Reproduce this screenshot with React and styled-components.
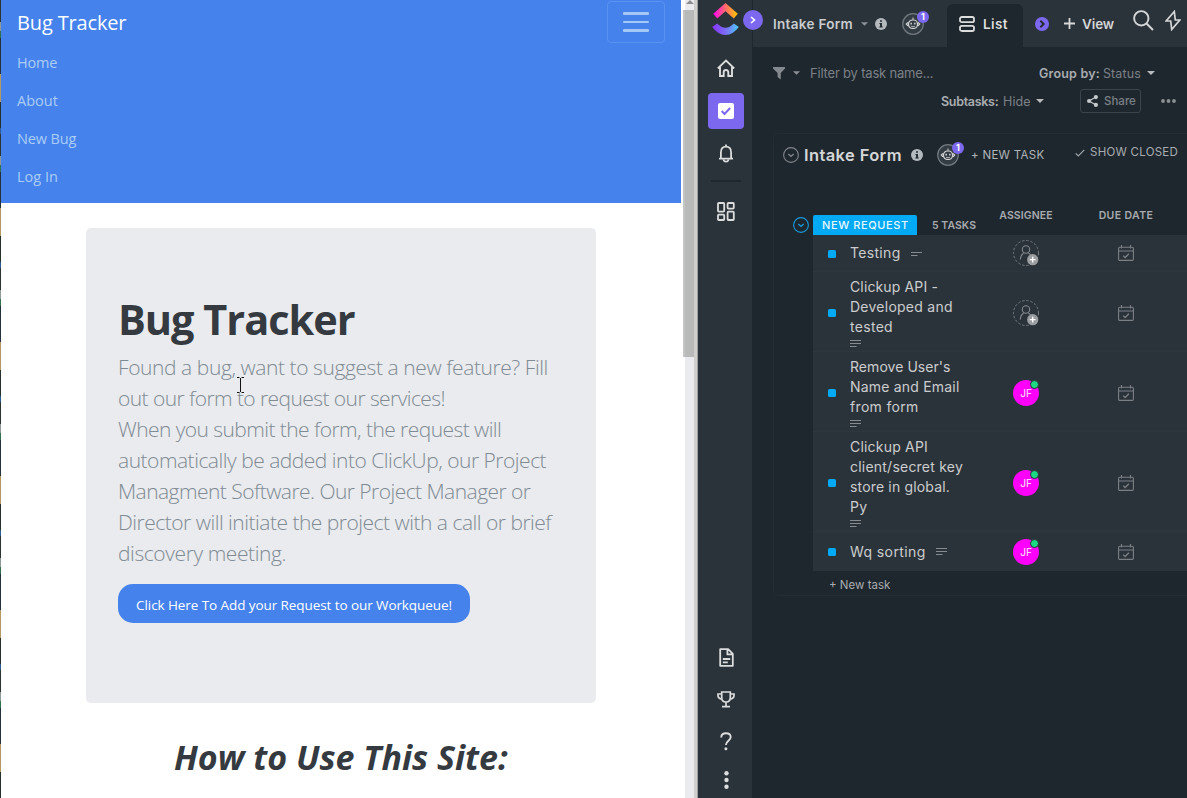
import React from "react";
import styled, { createGlobalStyle } from "styled-components";

const GlobalStyle = createGlobalStyle`
  * { box-sizing: border-box; }
  body { margin: 0; overflow: hidden; background: #1f272e; }
  h1, h2, p, ul { margin: 0; padding: 0; font-weight: inherit; }
  svg { display: block; flex: none; }
`;

const Screen = styled.div`
  display: flex;
  width: 1187px;
  height: 798px;
  overflow: hidden;
`;

/* ---------- left window: bug tracker site ---------- */

const DesktopEdge = styled.div`
  flex: none;
  width: 1px;
  background: repeating-linear-gradient(
    180deg, #2c3431 0 22px, #8f9a98 22px 31px, #2f6f4b 31px 38px, #24303a 38px 74px, #b39a63 74px 102px,
    #27312c 102px 128px, #2c5c8f 128px 134px
  );
`;

const Site = styled.div`
  flex: none;
  width: 684px;
  padding-right: 4px;
  background: #fff;
  font-family: "Open Sans", "Noto Sans", sans-serif;
`;

const Navbar = styled.nav`
  height: 203px;
  padding: 1px 16px 0;
  background: #4582ec;
`;

const NavTop = styled.div`
  display: flex;
  justify-content: space-between;
  height: 43px;
`;

const Brand = styled.div`
  font-size: 20px;
  line-height: 43px;
  color: #fff;
  letter-spacing: -0.15px;
`;

const Toggler = styled.div`
  display: flex;
  flex-direction: column;
  align-items: center;
  justify-content: center;
  gap: 6px;
  width: 58px;
  height: 42px;
  border: 1px solid #5a92f0;
  border-radius: 4px;
`;

const TogglerBar = styled.span`
  width: 26px;
  height: 2.4px;
  border-radius: 1px;
  background: #a5c9f6;
`;

const NavLink = styled.div`
  height: 38px;
  line-height: 38px;
  font-size: 14.5px;
  color: #abcdf5;
  letter-spacing: ${(p) => p.$ls || 0}px;
`;

const Jumbotron = styled.section`
  width: 510px;
  height: 475px;
  margin: 25px 0 0 85px;
  padding: 66px 32px 0;
  border-radius: 5px;
  background: #e9ebee;
`;

const Title = styled.h1`
  font-size: 41.5px;
  font-weight: 700;
  line-height: 50px;
  color: #343a40;
  white-space: nowrap;
  letter-spacing: -1.02px;
`;

const Lead = styled.p`
  margin-top: 8px;
`;

const LeadLine = styled.span`
  display: block;
  height: 31px;
  line-height: 31px;
  font-size: 21px;
  font-weight: 300;
  color: #808a93;
  white-space: nowrap;
  letter-spacing: ${(p) => p.$ls || 0}px;
`;

const RequestButton = styled.button`
  display: block;
  width: 352px;
  height: 39px;
  margin-top: 15px;
  padding: 1px 0 0;
  border: 0;
  border-radius: 15px;
  background: #4582ec;
  color: #fff;
  font: 13.5px/38px "Open Sans", "Noto Sans", sans-serif;
  line-height: 40px;
  white-space: nowrap;
  letter-spacing: -0.08px;
`;

const HowTo = styled.h2`
  margin: 30px 0 0 173px;
  font-size: 34px;
  font-weight: 700;
  font-style: italic;
  line-height: 48px;
  color: #343a40;
  white-space: nowrap;
`;

const Caret = styled.svg`
  position: absolute;
  left: 236px;
  top: 377px;
`;

const Scrollbar = styled.div`
  display: flex;
  flex-direction: column;
  flex: none;
  width: 9px;
  background: #e9ebee;
`;

const ScrollArrow = styled.div`
  display: flex;
  align-items: flex-start;
  justify-content: center;
  height: 10px;
`;

const ScrollThumb = styled.div`
  height: 347px;
  margin-left: -2px;
  border-left: 2px solid #c3c5c4;
  background: #b8bab9;
`;

const WindowEdge = styled.div`
  flex: none;
  width: 4px;
  background: linear-gradient(90deg, #cfd0ce 0 3px, #9b9d9c 3px);
`;

/* ---------- right window: task manager ---------- */

const Rail = styled.aside`
  position: relative;
  display: flex;
  flex: none;
  flex-direction: column;
  align-items: center;
  width: 54px;
  padding: 3px 0 0 2px;
  background: #2b333a;
  color: #dcdddd;
`;

const RailItem = styled.div`
  display: flex;
  align-items: center;
  justify-content: center;
  width: 36px;
  height: 36px;
  margin-top: ${(p) => p.$gap || 0}px;
  border-radius: 4px;
  background: ${(p) => (p.$active ? "#7b68ee" : "transparent")};
`;

const RailRule = styled.div`
  width: 30px;
  height: 2px;
  margin-top: 9px;
  background: #1f272e;
`;

const RailSpacer = styled.div`
  flex: 1;
`;

const Expander = styled.div`
  position: absolute;
  z-index: 2;
  top: 10px;
  right: -11px;
  display: flex;
  align-items: center;
  justify-content: center;
  width: 20px;
  height: 20px;
  border-radius: 50%;
  background: #7b68ee;
`;

const Workspace = styled.main`
  flex: 1;
  min-width: 0;
  overflow: hidden;
  background: #1f272e;
  font-family: Inter, "Liberation Sans", sans-serif;
`;

const Label = styled.span`
  flex: none;
  font-size: ${(p) => p.$size || 13}px;
  font-weight: ${(p) => p.$weight || 400};
  color: ${(p) => p.$color || "#c9cccf"};
  letter-spacing: ${(p) => p.$ls || 0}px;
  margin-left: ${(p) => p.$ml || 0}px;
  width: ${(p) => (p.$w ? p.$w + "px" : "auto")};
  white-space: nowrap;
`;

const Slot = styled.span`
  display: flex;
  flex: none;
  margin-left: ${(p) => p.$ml || 0}px;
  margin-top: ${(p) => p.$mt || 0}px;
  margin-bottom: ${(p) => p.$mb || 0}px;
`;

const TopBar = styled.header`
  display: flex;
  align-items: center;
  height: 47px;
  padding-left: 20px;
  border-left: 1px solid #20282f;
  background: #2b333a;
`;

const ListTab = styled.div`
  display: flex;
  align-items: center;
  align-self: flex-end;
  flex: none;
  width: 76px;
  height: 43px;
  margin-left: 23px;
  padding: 0 0 3px 12px;
  border-radius: 6px 6px 0 0;
  background: #1f272e;
`;

const BotBadge = styled.span`
  position: relative;
  flex: none;
  width: 22px;
  height: 22px;
  margin-left: ${(p) => p.$ml}px;
`;

const BotCount = styled.span`
  position: absolute;
  top: -2px;
  left: 15px;
  width: 12px;
  height: 12px;
  border-radius: 6px;
  background: #7b68ee;
  color: #fff;
  font-size: 9px;
  font-weight: 700;
  line-height: 12px;
  text-align: center;
`;

const FilterRow = styled.div`
  display: flex;
  align-items: center;
  height: 28px;
  margin-top: 12px;
  padding-left: 21px;
`;

const OptionsRow = styled.div`
  display: flex;
  align-items: center;
  height: 28px;
  padding-left: 189px;
`;

const ShareButton = styled.div`
  display: flex;
  flex: none;
  align-items: center;
  width: 61px;
  height: 24px;
  margin-left: 36px;
  padding-left: 6px;
  border: 1px solid #3c444b;
  border-radius: 3px;
`;

const Card = styled.section`
  width: 430px;
  height: 463px;
  margin: 18px 0 0 21px;
  border: 1px solid #252d34;
  border-radius: 6px;
`;

const CardHead = styled.div`
  display: flex;
  align-items: center;
  height: 42px;
  padding-left: 9px;
`;

const GroupHead = styled.div`
  display: flex;
  align-items: flex-end;
  height: 59px;
  padding-left: 19px;
`;

const StatusTag = styled.div`
  display: flex;
  align-items: center;
  flex: none;
  width: 104px;
  height: 20px;
  margin-left: 4px;
  padding-left: 9px;
  border-radius: 2px 2px 0 0;
  background: #02a9f4;
`;

const ColumnLabel = styled.div`
  display: flex;
  justify-content: center;
  flex: none;
  width: 100px;
  height: 26px;
  line-height: 14px;
`;

const CountCell = styled.div`
  display: flex;
  align-items: center;
  width: 44px;
  height: 20px;
  margin-left: 15px;
`;

const TaskList = styled.div`
  margin-left: 39px;
  background: #2b333a;
`;

const TaskRow = styled.div`
  display: grid;
  grid-template-columns: 37px 126px 100px 100px;
  align-items: center;
  height: ${(p) => p.$h}px;
  padding-top: ${(p) => (p.$inline ? 0 : 2)}px;
  border-bottom: 1px solid #2f373e;
  &:last-child { border-bottom: 0; }
`;

const StatusSquare = styled.span`
  width: 8px;
  height: 8px;
  margin: 1px 0 0 15px;
  border-radius: 1.5px;
  background: #02a9f4;
`;

const TaskName = styled.div`
  display: flex;
  flex-direction: ${(p) => (p.$inline ? "row" : "column")};
  align-items: ${(p) => (p.$inline ? "center" : "flex-start")};
  gap: ${(p) => (p.$inline ? "10px" : "0")};
  padding-top: ${(p) => (p.$inline ? 0 : 2)}px;
`;

const TaskLine = styled.span`
  height: 20px;
  font-size: 14px;
  line-height: 20px;
  color: #cbcdce;
  white-space: nowrap;
  letter-spacing: ${(p) => p.$ls || 0}px;
`;

const NoteSlot = styled.span`
  height: ${(p) => (p.$inline ? 9 : 14)}px;
  padding-top: ${(p) => (p.$inline ? 1 : 3)}px;
`;

const Cell = styled.div`
  display: flex;
  justify-content: center;
`;

const Avatar = styled.div`
  position: relative;
  width: 26px;
  height: 26px;
  border-radius: 50%;
  background: #ff00fc;
  color: #fbd5fb;
  font-size: 10px;
  font-weight: 500;
  line-height: 26px;
  text-align: center;
`;

const Online = styled.span`
  position: absolute;
  top: 0;
  right: 0;
  width: 9px;
  height: 9px;
  border: 1px solid #2b333a;
  border-radius: 50%;
  background: #1bd882;
`;

const NewTask = styled.div`
  padding-left: 55px;
  line-height: 24px;
`;

/* ---------- icons ---------- */

const Down = ({ color = "#8c9196", w = 7 }) => (
  <svg width={w} height="4" viewBox="0 0 8 4"><path d="M0 0h8L4 4z" fill={color} /></svg>
);

const Info = () => (
  <svg width="12" height="12" viewBox="0 0 12 12">
    <circle cx="6" cy="6" r="6" fill="#b4b9be" />
    <path d="M5 2.2h2v1.6H5zM4.4 4.9H7v3.6h.8v1.1H4.3V8.5H5V6h-.6z" fill="#252d34" />
  </svg>
);

const Bot = ({ ml }) => (
  <BotBadge $ml={ml}>
    <svg width="22" height="22" viewBox="0 0 22 22" fill="none">
      <circle cx="11" cy="11" r="10.3" fill="#343c43" stroke="#727a80" strokeWidth="1.2" />
      <path d="M11 4.5v2.2" stroke="#d5d7d8" strokeWidth="1" />
      <rect x="6.5" y="7" width="9" height="8.5" rx="4" stroke="#d5d7d8" strokeWidth="1.2" />
      <path d="M6 9.3 4.3 11 6 12.8M16 9.3l1.7 1.7-1.7 1.8" stroke="#d5d7d8" strokeWidth="1.2" />
      <path d="M9.2 9.8v1.8M12.8 9.8v1.8" stroke="#d5d7d8" strokeWidth="1.4" />
      <path d="M9.2 13.3q1.8 1.2 3.6 0" stroke="#d5d7d8" strokeWidth=".9" />
    </svg>
    <BotCount>1</BotCount>
  </BotBadge>
);

const CircleDown = ({ color }) => (
  <svg width="16" height="16" viewBox="0 0 16 16" fill="none" stroke={color}>
    <circle cx="8" cy="8" r="7.4" strokeWidth="1.1" />
    <path d="m5.3 7 2.7 2.3L10.7 7" strokeWidth="1.3" />
  </svg>
);

const Note = ({ dense }) => (
  <svg width="11" height="7" viewBox="0 0 11 7" stroke="#868b8f">
    {dense ? <path d="M0 .5h11M0 3.5h11M0 6.5h6.5" /> : <path d="M0 2.5h11M0 5.5h6.5" />}
  </svg>
);

const EmptyAssignee = () => (
  <svg width="26" height="26" viewBox="0 0 26 26" fill="none">
    <circle cx="13" cy="13" r="12.5" stroke="#777d82" strokeDasharray="2.4 1.8" />
    <circle cx="13" cy="9.5" r="3.7" stroke="#858a8e" strokeWidth="1.1" />
    <path d="M7.3 19.5q.2-4.6 3.3-6.2M15.5 13.3q1.5.8 2.2 2" stroke="#858a8e" strokeWidth="1.1" />
    <circle cx="19.7" cy="19.7" r="5.6" fill="#9b9ea1" />
    <path d="M19.7 16.8v5.8M16.8 19.7h5.8" stroke="#fff" strokeWidth="1.3" />
  </svg>
);

const Calendar = () => (
  <svg width="16" height="16" viewBox="0 0 16 16" fill="none" stroke="#7b8085">
    <rect x=".6" y="2.2" width="14.8" height="13.2" rx="1.2" strokeWidth="1.1" />
    <path d="M.6 6h14.8M3.5 0v3.6M12.5 0v3.6" strokeWidth="1.1" />
    <path d="m5.2 10.6 1.9 1.9 3.8-3.8" strokeWidth="1.3" />
  </svg>
);

const Logo = () => (
  <svg width="28" height="33" viewBox="0 0 28 33" fill="none">
    <defs>
      <linearGradient id="logoTop" x1="0" x2="1">
        <stop offset="0" stopColor="#ff02f0" /><stop offset=".5" stopColor="#ff6a6c" /><stop offset="1" stopColor="#ffc800" />
      </linearGradient>
      <linearGradient id="logoBottom" x1="0" x2="1">
        <stop offset="0" stopColor="#8930fd" /><stop offset=".55" stopColor="#7a74f4" /><stop offset="1" stopColor="#49ccf9" />
      </linearGradient>
    </defs>
    <path d="M1.2 10.8 13.5 0l12.3 10.8-4 4.8-8.3-7.4-8.3 7.4z" fill="url(#logoTop)" />
    <path d="m.2 24.1 4.9-3.7q8.4 8.5 16.8 0l4.9 3.7Q21 32 13.5 32T.2 24.1z" fill="url(#logoBottom)" />
  </svg>
);

const HomeIcon = () => (
  <svg width="18" height="18" viewBox="0 0 18 18" fill="none" stroke="currentColor" strokeWidth="1.9">
    <path d="M.8 9.4 9 1.6l8.2 7.8M3 8v9h3.7v-3.7a2.3 2.3 0 0 1 4.6 0V17H15V8" />
  </svg>
);

const TasksIcon = () => (
  <svg width="16" height="16" viewBox="0 0 16 16" fill="none">
    <rect width="16" height="16" rx="2" fill="#fff" />
    <path d="m3.7 8 2.8 3 5.6-6" stroke="#7b68ee" strokeWidth="2" />
  </svg>
);

const BellIcon = () => (
  <svg width="16" height="19" viewBox="0 0 16 19" fill="none" stroke="currentColor" strokeWidth="1.8">
    <path d="M8 .5v2M1 14.6h14M2.9 14.4V8.4C2.9 5 4.9 2.7 8 2.7s5.1 2.3 5.1 5.7v6" />
    <path d="M5.4 15.4q.5 2.3 2.6 2.3t2.6-2.3" />
  </svg>
);

const GridIcon = () => (
  <svg width="18" height="19" viewBox="0 0 18 19" fill="none" stroke="currentColor" strokeWidth="1.8">
    <rect x="1" y="1" width="6.2" height="8.6" rx=".8" /><rect x="10.6" y="1" width="6.2" height="5.6" rx=".8" />
    <rect x="1" y="12.6" width="6.2" height="5.4" rx=".8" /><rect x="10.6" y="9.6" width="6.2" height="8.4" rx=".8" />
  </svg>
);

const DocIcon = () => (
  <svg width="15" height="19" viewBox="0 0 15 19" fill="none" stroke="currentColor" strokeWidth="1.8" strokeLinejoin="round">
    <path d="M1.2 1.2h8l4.6 4.6v12H1.2zM8.4 1.4v5h5M3.8 11h7.4M3.8 14.4h5" />
  </svg>
);

const TrophyIcon = () => (
  <svg width="18" height="17" viewBox="0 0 18 17" fill="none" stroke="currentColor" strokeWidth="1.7">
    <path d="M4.7 1h8.6v5.5q0 4.5-4.3 4.5T4.7 6.5zM4.5 3H1v1.6q0 3 4 3.6M13.5 3H17v1.6q0 3-4 3.6M9 11v4M5 15.6h8" />
  </svg>
);

const HelpIcon = () => (
  <svg width="12" height="19" viewBox="0 0 12 19" fill="none">
    <path d="M1.2 5.5Q1.4 1.3 6 1.3t4.7 3.8c0 3.6-4.8 3.8-4.8 8" stroke="currentColor" strokeWidth="1.9" />
    <circle cx="5.9" cy="16.8" r="1.5" fill="currentColor" />
  </svg>
);

const MoreIcon = () => (
  <svg width="5" height="18" viewBox="0 0 5 18" fill="currentColor">
    <circle cx="2.5" cy="2.2" r="2.2" /><circle cx="2.5" cy="9" r="2.2" /><circle cx="2.5" cy="15.8" r="2.2" />
  </svg>
);

/* ---------- content ---------- */

const navLinks = [
  ["Home", -0.2],
  ["About", 0],
  ["New Bug", -0.12],
  ["Log In", 0],
];

const leadLines = [
  ["Found a bug, want to suggest a new feature? Fill", -0.42],
  ["out our form to request our services!", -0.57],
  ["When you submit the form, the request will", -0.56],
  ["automatically be added into ClickUp, our Project", -0.49],
  ["Managment Software. Our Project Manager or", -0.54],
  ["Director will initiate the project with a call or brief", -0.5],
  ["discovery meeting.", -0.41],
];

const tasks = [
  { h: 37, lines: [["Testing", 0.32]], inline: true },
  { h: 80, lines: [["Clickup API -", 0.137], ["Developed and", 0.25], ["tested", 0.302]] },
  { h: 80, lines: [["Remove User's", 0.05], ["Name and Email", 0.2], ["from form", 0.33]], who: "JF" },
  { h: 100, lines: [["Clickup API", 0.196], ["client/secret key", 0.222], ["store in global.", 0.166], ["Py", 0.3]], who: "JF" },
  { h: 39, lines: [["Wq sorting", 0.4]], inline: true, dense: true, who: "JF" },
];

export default function App() {
  return (
    <Screen>
      <GlobalStyle />
      <DesktopEdge />
      <Site>
        <Navbar>
          <NavTop>
            <Brand>Bug Tracker</Brand>
            <Toggler><TogglerBar /><TogglerBar /><TogglerBar /></Toggler>
          </NavTop>
          {navLinks.map(([text, ls]) => <NavLink key={text} $ls={ls}>{text}</NavLink>)}
        </Navbar>
        <Jumbotron>
          <Title>Bug Tracker</Title>
          <Lead>{leadLines.map(([text, ls]) => <LeadLine key={text} $ls={ls}>{text}</LeadLine>)}</Lead>
          <RequestButton>Click Here To Add your Request to our Workqueue!</RequestButton>
        </Jumbotron>
        <HowTo>How to Use This Site:</HowTo>
        <Caret width="9" height="17" viewBox="0 0 9 17" stroke="#111" fill="none">
          <path d="M1 .5h2.5M5.5 .5H8M4.5 1v14M1 15.5h2.5M5.5 15.5H8" />
        </Caret>
      </Site>
      <Scrollbar>
        <ScrollArrow><svg width="8" height="5" viewBox="0 0 8 5"><path d="M4 0l4 4H0z" fill="#8a8c8e" /></svg></ScrollArrow>
        <ScrollThumb />
      </Scrollbar>
      <WindowEdge />
      <Rail>
        <Logo />
        <Expander><svg width="6" height="8" viewBox="0 0 6 8" fill="none"><path d="m1 1 3.5 3L1 7" stroke="#fff" strokeWidth="1.6" /></svg></Expander>
        <RailItem $gap={14}><HomeIcon /></RailItem>
        <RailItem $gap={7} $active><TasksIcon /></RailItem>
        <RailItem $gap={6}><BellIcon /></RailItem>
        <RailRule />
        <RailItem $gap={11}><GridIcon /></RailItem>
        <RailSpacer />
        <RailItem><DocIcon /></RailItem>
        <RailItem $gap={6}><TrophyIcon /></RailItem>
        <RailItem $gap={6}><HelpIcon /></RailItem>
        <RailItem $gap={3}><MoreIcon /></RailItem>
      </Rail>
      <Workspace>
        <TopBar>
          <Label $size={13.5} $ls={0.3} $weight={600} $w={80}>Intake Form</Label>
          <Slot $ml={8}><Down /></Slot>
          <Slot $ml={7}><Info /></Slot>
          <Bot ml={15} />
          <ListTab>
            <svg width="16" height="16" viewBox="0 0 16 16" fill="none" stroke="#dcdddd" strokeWidth="1.8">
              <rect x="1" y="1" width="14" height="5.2" rx="1.8" /><rect x="1" y="9.8" width="14" height="5.2" rx="1.8" />
            </svg>
            <Label $ls={0.4} $ml={8} $size={13.5} $weight={600} $color="#dddede">List</Label>
          </ListTab>
          <Slot $ml={12}>
            <svg width="14" height="14" viewBox="0 0 14 14" fill="none">
              <circle cx="7" cy="7" r="7" fill="#7b68ee" /><path d="m5.3 3.8 3.4 3.2-3.4 3.2" stroke="#232b32" strokeWidth="1.9" />
            </svg>
          </Slot>
          <Slot $ml={15}>
            <svg width="11" height="11" viewBox="0 0 11 11" stroke="#d8d9da" strokeWidth="1.8"><path d="M5.5 0v11M0 5.5h11" /></svg>
          </Slot>
          <Label $w={32} $ml={7} $ls={-0.1} $size={13.5} $weight={600} $color="#d4d6d7">View</Label>
          <Slot $ml={19} $mt={-7}>
            <svg width="21" height="21" viewBox="0 0 21 21" fill="none" stroke="#d4d6d7" strokeWidth="1.9">
              <circle cx="8.3" cy="8.3" r="7.2" /><path d="m13.5 13.5 6.5 6.5" />
            </svg>
          </Slot>
          <Slot $ml={11} $mt={-7}>
            <svg width="16" height="21" viewBox="0 0 16 21" fill="none" stroke="#d4d6d7" strokeWidth="1.7">
              <path d="M9.3 1.5 1.2 11h4.5L6.7 19.500 14.8 10h-4.5z" />
            </svg>
          </Slot>
        </TopBar>
        <FilterRow>
          <svg width="12" height="13" viewBox="0 0 12 13"><path d="M0 0h12v1.5L7.8 6v6.5L4.6 10V6L0 1.5z" fill="#83898e" /></svg>
          <Slot $ml={8}><Down /></Slot>
          <Label $ls={-0.19} $w={124} $ml={10} $size={13} $color="#7b8187">Filter by task name...</Label>
          <Label $ls={0.2} $w={61} $ml={105} $size={12.5} $weight={600} $color="#a9adb1">Group by:</Label>
          <Label $ls={0.1} $w={39} $ml={3} $size={12.5} $color="#7b8187">Status</Label>
          <Slot $ml={5}><Down color="#b8bbbe" w={8} /></Slot>
        </FilterRow>
        <OptionsRow>
          <Label $ls={-0.3} $w={58} $size={12.5} $weight={600} $color="#a9adb1">Subtasks:</Label>
          <Label $ls={0.1} $w={28} $ml={4} $size={12.5} $color="#7b8187">Hide</Label>
          <Slot $ml={5}><Down color="#b8bbbe" w={8} /></Slot>
          <ShareButton>
            <svg width="11" height="12" viewBox="0 0 11 12">
              <path d="M9 2 2 6l7 4" fill="none" stroke="#c6c9cb" strokeWidth="1.2" />
              <circle cx="8.9" cy="2.1" r="2.1" fill="#c6c9cb" /><circle cx="2.1" cy="6" r="2.1" fill="#c6c9cb" /><circle cx="8.9" cy="9.9" r="2.1" fill="#c6c9cb" />
            </svg>
            <Label $ml={6} $size={11.5} $weight={500} $color="#7b8187">Share</Label>
          </ShareButton>
          <Slot $ml={20}>
            <svg width="15" height="4" viewBox="0 0 15 4" fill="#8b9095"><circle cx="2" cy="2" r="1.9" /><circle cx="7.5" cy="2" r="1.9" /><circle cx="13" cy="2" r="1.9" /></svg>
          </Slot>
        </OptionsRow>
        <Card>
          <CardHead>
            <CircleDown color="#81868b" />
            <Label $ls={0.38} $w={98} $ml={5} $size={16.5} $weight={600} $color="#d4d6d7">Intake Form</Label>
            <Slot $ml={9}><Info /></Slot>
            <Bot ml={14} />
            <Label $ls={0.3} $w={73} $ml={12} $size={11.5} $color="#b1b5b9">+ NEW TASK</Label>
            <Slot $ml={31} $mt={-4}><svg width="10" height="8" viewBox="0 0 10 8" fill="none"><path d="m.7 4.3 2.6 2.6L9.3.9" stroke="#a0a5a9" strokeWidth="1.2" /></svg></Slot>
            <Slot $ml={5} $mt={-6}><Label $ls={0.26} $w={89} $size={11.5} $color="#a7acb0">SHOW CLOSED</Label></Slot>
          </CardHead>
          <GroupHead>
            <Slot $mb={2}><CircleDown color="#159bdc" /></Slot>
            <StatusTag><Label $ls={0.6} $size={11} $weight={500} $color="#e8f6fd">NEW REQUEST</Label></StatusTag>
            <CountCell><Label $ls={0.05} $size={10.5} $weight={600} $color="#a7abaf">5 TASKS</Label></CountCell>
            <ColumnLabel><Label $ls={0.1} $size={10.5} $weight={600} $color="#a7abaf">ASSIGNEE</Label></ColumnLabel>
            <ColumnLabel><Label $ls={0.4} $size={10.5} $weight={600} $color="#a7abaf">DUE DATE</Label></ColumnLabel>
          </GroupHead>
          <TaskList>
            {tasks.map((task, i) => (
              <TaskRow key={i} $h={task.h} $inline={task.inline}>
                <StatusSquare />
                <TaskName $inline={task.inline}>
                  {task.lines.map(([text, ls]) => <TaskLine key={text} $ls={ls}>{text}</TaskLine>)}
                  <NoteSlot $inline={task.inline}><Note dense={!task.inline || task.dense} /></NoteSlot>
                </TaskName>
                <Cell>{task.who ? <Avatar>{task.who}<Online /></Avatar> : <EmptyAssignee />}</Cell>
                <Cell><Calendar /></Cell>
              </TaskRow>
            ))}
          </TaskList>
          <NewTask><Label $size={11.5} $color="#a7abaf">+ New task</Label></NewTask>
        </Card>
      </Workspace>
    </Screen>
  );
}
